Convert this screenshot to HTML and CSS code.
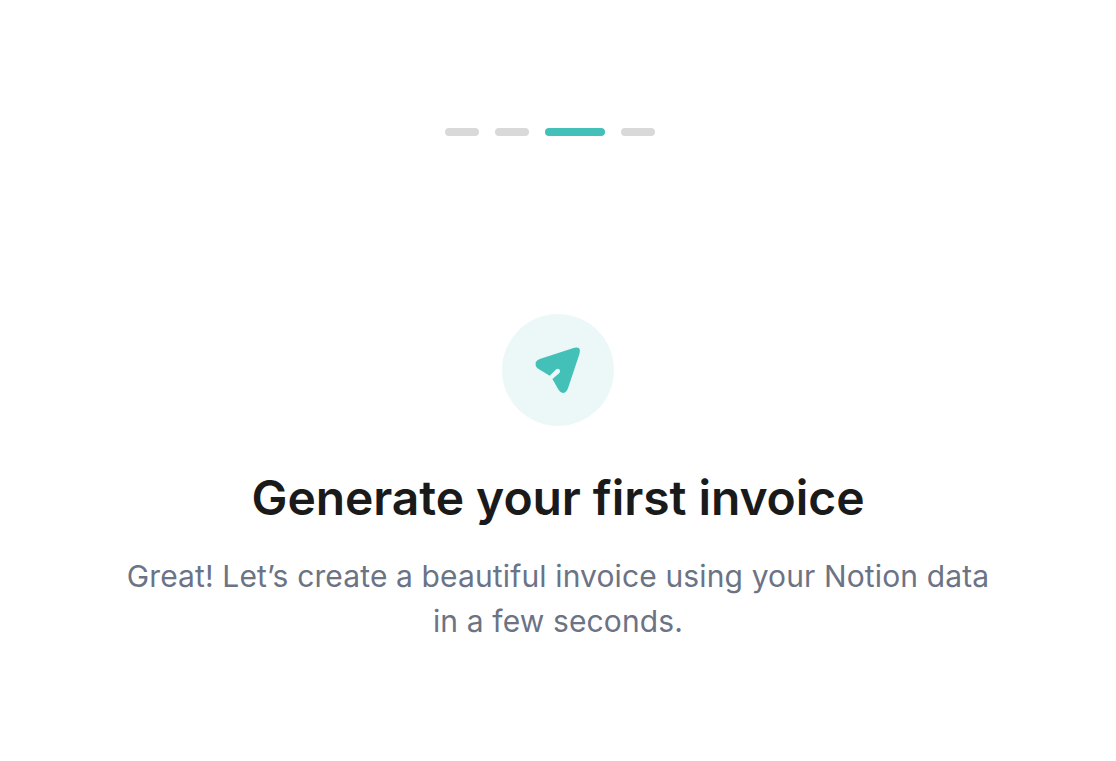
FILE: index.html
```html
<!DOCTYPE html>
<html lang="en">
<head>
<meta charset="utf-8">
<title>Generate your first invoice</title>
<link rel="stylesheet" href="styles.css">
</head>
<body>
<main class="page">
  <div class="steps">
    <span class="step"></span>
    <span class="step"></span>
    <span class="step step-active"></span>
    <span class="step"></span>
  </div>
  <div class="badge">
    <svg class="badge-icon" width="48" height="48" viewBox="0 0 48 48" aria-hidden="true">
      <path d="M38 2.4 L5.7 13 Q2.6 14.1 1.6 16.5 Q1 19.8 3.4 22.3 L15.7 29.7 L22 23.6 Q23.8 22 25.4 23.5 Q27 25.2 25.4 26.9 L18.4 33 L24.7 44 Q26.6 47.2 29.3 47 Q32.6 46.4 34 42.3 L45.6 7.4 Q46.6 3.6 45 2 Q42.6 0.8 38 2.4 Z" fill="#43c1b8"/>
    </svg>
  </div>
  <h1 class="title">Generate your first invoice</h1>
  <p class="text">Great! Let’s create a beautiful invoice using your Notion data<br>in a few seconds.</p>
</main>
</body>
</html>
```
FILE: styles.css
```css
html, body { margin: 0; padding: 0; background: #fff; }
.page {
  display: flex;
  flex-direction: column;
  align-items: center;
  height: 761px;
  padding-top: 128px;
  box-sizing: border-box;
  font-family: Inter, sans-serif;
}
.steps { display: flex; }
.step { width: 34px; height: 8px; margin-right: 16px; border-radius: 4px; background: #d9d9d9; }
.step-active { width: 60px; background: #43c1b8; }
.badge {
  display: flex;
  align-items: center;
  justify-content: center;
  width: 112px;
  height: 112px;
  margin-top: 178px;
  border-radius: 50%;
  background: #ecf8f8;
}
.title {
  margin: 40px 0 0;
  font-size: 48px;
  line-height: 64px;
  font-weight: 600;
  letter-spacing: -0.07px;
  color: #1a1a1a;
}
.text {
  margin: 24px 0 0;
  font-size: 30px;
  line-height: 45px;
  letter-spacing: 0.13px;
  text-align: center;
  color: #6b7385;
}
```
